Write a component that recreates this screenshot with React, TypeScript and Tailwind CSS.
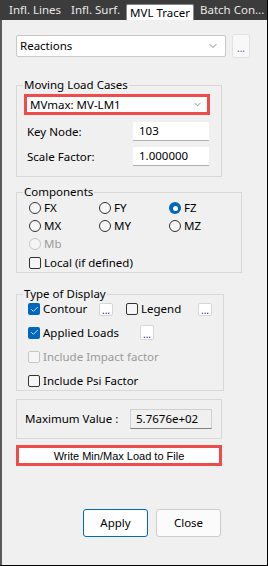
import { ChevronDown, Check } from "lucide-react";

function Radio({ label, checked, disabled }: { label: string; checked?: boolean; disabled?: boolean }) {
  return (
    <div className={`flex items-center gap-[3px] ${disabled ? "text-[#9a9a9a]" : "text-black"}`}>
      {checked ? (
        <span className="w-[12px] h-[12px] rounded-full bg-[#0067c0] flex items-center justify-center">
          <span className="w-[5px] h-[5px] rounded-full bg-white" />
        </span>
      ) : (
        <span className={`w-[12px] h-[12px] rounded-full border ${disabled ? "border-[#c6c6c6] bg-[#f5f5f5]" : "border-[#333] bg-[#f6f6f6]"}`} />
      )}
      <span>{label}</span>
    </div>
  );
}

function Checkbox({ label, checked, disabled }: { label: string; checked?: boolean; disabled?: boolean }) {
  return (
    <div className={`flex items-center gap-[3px] ${disabled ? "text-[#9a9a9a]" : "text-black"}`}>
      {checked ? (
        <span className="w-[12px] h-[12px] rounded-[2px] bg-[#0067c0] flex items-center justify-center">
          <Check size={9} strokeWidth={2} className="text-white" />
        </span>
      ) : (
        <span className={`w-[12px] h-[12px] rounded-[2px] border ${disabled ? "border-[#c6c6c6] bg-[#f5f5f5]" : "border-[#333] bg-[#f6f6f6]"}`} />
      )}
      <span>{label}</span>
    </div>
  );
}

function DotsButton({ className = "" }: { className?: string }) {
  return (
    <span className={`w-[14px] h-[13px] bg-white border border-[#d6d6d6] rounded-[2px] flex items-end justify-center text-[10px] leading-[10px] text-[#2a2a7a] ${className}`}>
      ...
    </span>
  );
}

export default function App() {
  return (
    <div
      className="w-[268px] h-[566px] flex flex-col bg-[#f0f0f0] border-r border-b border-black text-[11.5px] leading-[14px] overflow-hidden"
      style={{ fontFamily: '"Noto Sans", "Segoe UI", sans-serif' }}
    >
      {/* Tabs */}
      <div className="h-[20px] bg-[#3c3c3c] flex items-end shrink-0 whitespace-nowrap">
        <div className="w-[71px] shrink-0 pl-[9px] text-[#e8e8e8] pb-[3px]">Infl. Lines</div>
        <div className="w-[55px] shrink-0 text-[#e8e8e8] pb-[3px]">Infl. Surf.</div>
        <div className="w-[68px] shrink-0 h-[16px] bg-white border border-b-0 border-[#8a8a8a] rounded-t-[2px] text-black flex items-center justify-center">MVL Tracer</div>
        <div className="shrink-0 pl-[6px] text-[#e8e8e8] pb-[3px]">Batch Con...</div>
      </div>

      <div className="flex-1 flex flex-col border-l-2 border-[#5a5a5a] pl-[14px] pr-[16px]">
        {/* Reactions select */}
        <div className="flex items-center mt-[14px] gap-[6px]">
          <div className="w-[210px] h-[22px] bg-white border border-[#c8c8c8] rounded-[2px] flex items-center justify-between pl-[3px] pr-[6px]">
            <span>Reactions</span>
            <ChevronDown size={12} strokeWidth={1.25} className="text-[#444]" />
          </div>
          <div className="w-[18px] h-[24px] bg-[#f8f8f8] border border-[#e2e2e2] rounded-[3px] flex items-end justify-center pb-[4px] text-[10px] leading-[10px] text-[#6a5aa0]">
            ...
          </div>
        </div>

        {/* Moving Load Cases */}
        <fieldset className="w-[206px] mt-[20px] border border-[#d8d8d8] px-[8px] h-[99px]">
          <legend className="px-[1px] -ml-[2px]">Moving Load Cases</legend>
          <div className="w-[186px] h-[21px] border-[3px] border-[#ee4b4b] bg-white flex items-center justify-between pl-[3px] pr-[4px] mt-[2px] -ml-[1px]">
            <span>MVmax: MV-LM1</span>
            <ChevronDown size={11} strokeWidth={1.25} className="text-[#555]" />
          </div>
          <div className="flex items-center justify-between mt-[7px]">
            <span className="pl-[2px]">Key Node:</span>
            <div className="w-[76px] h-[19px] bg-white border-b border-[#b0b0b0] flex items-center px-[6px] mr-[4px]">103</div>
          </div>
          <div className="flex items-center justify-between mt-[6px]">
            <span className="pl-[2px]">Scale Factor:</span>
            <div className="w-[76px] h-[19px] bg-white border-b border-[#b0b0b0] flex items-center px-[6px] mr-[4px]">1.000000</div>
          </div>
        </fieldset>

        {/* Components */}
        <fieldset className="w-[206px] mt-[8px] border border-[#d8d8d8] px-[12px] h-[88px]">
          <legend className="px-[1px] -ml-[6px]">Components</legend>
          <div className="grid grid-cols-[70px_70px_60px] gap-y-[4px] mt-[2px]">
            <Radio label="FX" />
            <Radio label="FY" />
            <Radio label="FZ" checked />
            <Radio label="MX" />
            <Radio label="MY" />
            <Radio label="MZ" />
            <Radio label="Mb" disabled />
          </div>
          <div className="mt-[5px]">
            <Checkbox label="Local (if defined)" />
          </div>
        </fieldset>

        {/* Type of Display */}
        <fieldset className="w-[206px] mt-[14px] border border-[#d8d8d8] px-[11px] h-[104px]">
          <legend className="px-[1px] -ml-[5px]">Type of Display</legend>
          <div className="flex items-center mt-[1px]">
            <div className="w-[71px]"><Checkbox label="Contour" checked /></div>
            <DotsButton />
            <div className="w-[13px]" />
            <div className="w-[72px]"><Checkbox label="Legend" /></div>
            <DotsButton />
          </div>
          <div className="flex items-center mt-[9px]">
            <div className="w-[112px]"><Checkbox label="Applied Loads" checked /></div>
            <DotsButton className="h-[15px]" />
          </div>
          <div className="mt-[10px]">
            <Checkbox label="Include Impact factor" disabled />
          </div>
          <div className="mt-[10px]">
            <Checkbox label="Include Psi Factor" />
          </div>
        </fieldset>

        {/* Maximum Value */}
        <div className="w-[206px] h-[40px] mt-[8px] border border-[#d8d8d8] flex items-center justify-between pl-[8px] pr-[9px]">
          <span>Maximum Value :</span>
          <div className="w-[82px] h-[20px] bg-[#f0f0f0] border border-[#d0d0d0] border-b-[#808080] flex items-center px-[5px]">5.7676e+02</div>
        </div>

        {/* Write button */}
        <div
          className="w-[206px] h-[21px] mt-[6px] border-[3px] border-[#ee4b4b] bg-white flex items-center justify-center text-[11px]"
          style={{ fontFamily: '"Liberation Sans", Arial, sans-serif' }}
        >
          Write Min/Max Load to File
        </div>

        {/* Footer buttons */}
        <div className="flex mt-[43px] pl-[67px] gap-[8px]">
          <div className="w-[65px] h-[28px] bg-white border border-[#0067c0] rounded-[3px] flex items-center justify-center">Apply</div>
          <div className="w-[65px] h-[28px] bg-[#fbfbfb] border border-[#cccccc] rounded-[3px] flex items-center justify-center">Close</div>
        </div>
      </div>
    </div>
  );
}
